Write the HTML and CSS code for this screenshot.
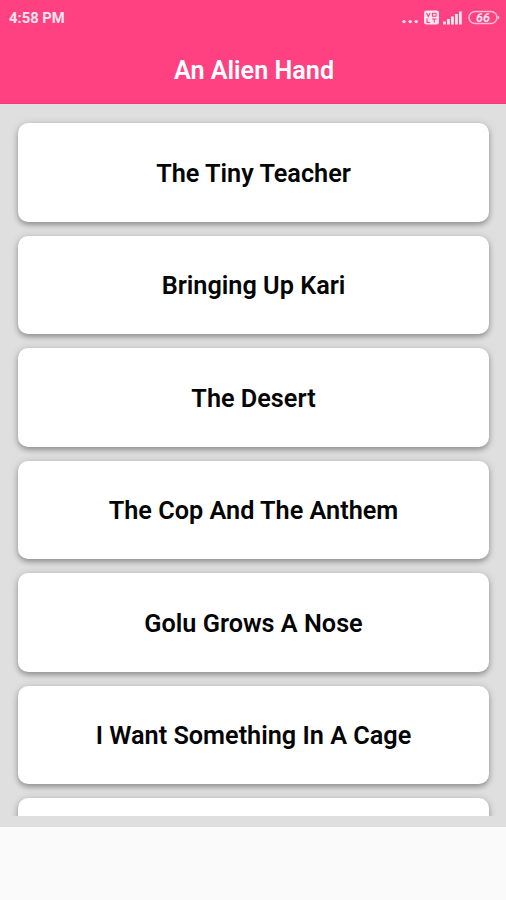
FILE: index.html
```html
<!DOCTYPE html>
<html lang="en">
<head>
<meta charset="utf-8">
<title>An Alien Hand</title>
<link rel="stylesheet" href="styles.css">
</head>
<body>
<header class="header">
  <div class="status">
    <span class="time">4:58 PM</span>
    <svg class="indicators" width="98" height="16" viewBox="0 0 98 16" aria-hidden="true">
      <g fill="#ffe3ee">
        <circle cx="2" cy="11.6" r="1.7"/><circle cx="8.200" cy="11.600" r="1.700"/><circle cx="14.200" cy="11.600" r="1.700"/>
        <rect x="22" y="0.500" width="15" height="14" rx="2.500"/>
        <rect x="41" y="11.500" width="2.800" height="3"/><rect x="45" y="9" width="2.800" height="5.500"/><rect x="49" y="6.500" width="2.800" height="8"/><rect x="53" y="4" width="2.800" height="10.500"/><rect x="57" y="1.500" width="2.800" height="13"/>
      </g>
      <g fill="none" stroke="#ff4081" stroke-width="1.100">
        <path d="M24.500 3l1.800 3.500 1.800-3.500M30.500 3.200h3.500v3h-3.500zM25 8.500v4h3M30 9h4.500M32.300 9v3.500"/>
      </g>
      <rect x="67" y="1.500" width="28" height="12" rx="6" fill="none" stroke="#ffb9d2" stroke-width="1.600"/>
      <path d="M96.500 6v3" stroke="#ffb9d2" stroke-width="1.500"/>
      <text class="battery" x="81" y="12.200" text-anchor="middle">66</text>
    </svg>
  </div>
  <h1 class="title">An Alien Hand</h1>
</header>
<main class="list">
  <div class="card">The Tiny Teacher</div>
  <div class="card">Bringing Up Kari</div>
  <div class="card">The Desert</div>
  <div class="card">The Cop And The Anthem</div>
  <div class="card">Golu Grows A Nose</div>
  <div class="card">I Want Something In A Cage</div>
  <div class="card"></div>
</main>
<footer class="footer"></footer>
</body>
</html>
```
FILE: styles.css
```css
* { box-sizing: border-box; }
body {
  margin: 0;
  height: 900px;
  display: flex;
  flex-direction: column;
  overflow: hidden;
  background: #dfdfdf;
  font-family: Roboto, "Liberation Sans", sans-serif;
}
.header {
  flex: none;
  height: 104px;
  background: #ff4081;
  border-bottom: 1px solid #ef3c79;
  color: #fff;
}
.status {
  height: 36px;
  padding: 0 6px 0 9px;
  display: flex;
  align-items: center;
  justify-content: space-between;
}
.time {
  font-size: 14.8px;
  font-weight: 700;
  color: #ffe3ee;
}
.battery {
  font-size: 12.5px;
  font-weight: 700;
  font-style: italic;
  fill: #ffe3ee;
}
.title {
  margin: 0;
  padding-left: 2px;
  line-height: 70px;
  text-align: center;
  font-size: 25.2px;
  font-weight: 600;
}
.list {
  flex: none;
  height: 712px;
  padding: 19px 17px 0 18px;
  display: flex;
  flex-direction: column;
  gap: 14px;
  overflow: hidden;
}
.card {
  flex: none;
  height: 98.5px;
  padding-top: 2px;
  display: flex;
  align-items: center;
  justify-content: center;
  border-radius: 10px;
  background: #fff;
  box-shadow: 0 3px 5px rgba(0, 0, 0, .26), 0 1px 8px rgba(0, 0, 0, .16);
  color: #050505;
  font-size: 25.25px;
  font-weight: 600;
}
.footer {
  flex: none;
  height: 73px;
  margin-top: 11px;
  background: #fafafa;
}
```
